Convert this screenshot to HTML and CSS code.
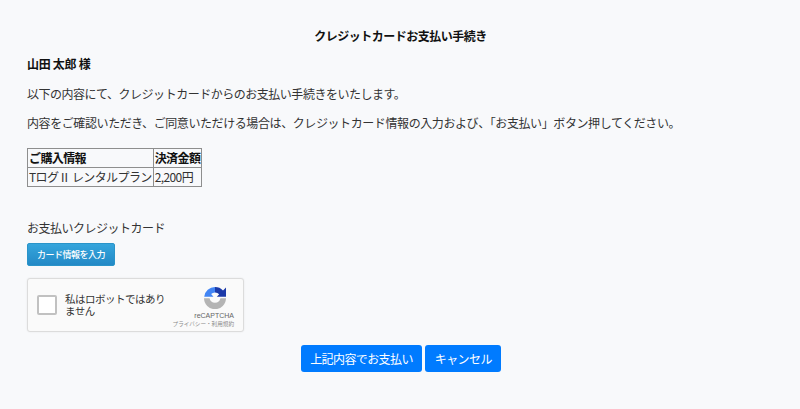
FILE: index.html
```html
<!DOCTYPE html>
<html lang="ja">
<head>
<meta charset="utf-8">
<title>クレジットカードお支払い手続き</title>
<link rel="stylesheet" href="styles.css">
</head>
<body>
<main class="page">
  <h1 class="title">クレジットカードお支払い手続き</h1>
  <p class="name">山田 太郎 様</p>
  <p class="line line-short">以下の内容にて、クレジットカードからのお支払い手続きをいたします。</p>
  <p class="line">内容をご確認いただき、ご同意いただける場合は、クレジットカード情報の入力および、「お支払い」ボタン押してください。</p>
  <table class="order">
    <tr><th>ご購入情報</th><th>決済金額</th></tr>
    <tr><td>TログⅡ レンタルプラン</td><td>2,200円</td></tr>
  </table>
  <p class="card-label">お支払いクレジットカード</p>
  <button class="card-btn" type="button">カード情報を入力</button>
  <div class="captcha">
    <span class="check"></span>
    <span class="captcha-text">私はロボットではありません</span>
    <div class="brand">
      <svg class="logo" viewBox="0 0 22 22" width="22" height="22" aria-hidden="true">
        <path fill="#4285f4" d="M11 0V5.500A5.500 5.500 0 0 0 7.100 7.100L9.500 9.800H.2A11 11 0 0 1 11 0Z"/>
        <path fill="#1c3aa9" d="M11 0A11 11 0 0 1 19 3.400L22 .5V9.800H12.800L15.200 7.300A5.500 5.500 0 0 0 11 5.500Z"/>
        <path fill="#b4b4b4" d="M0 11.200H5.600A5.500 5.500 0 0 0 16.400 11.200H22A11 11 0 0 1 0 11.200Z"/>
      </svg>
      <span class="brand-name">reCAPTCHA</span>
      <span class="brand-links">プライバシー・利用規約</span>
    </div>
  </div>
  <div class="actions">
    <button class="primary" type="button">上記内容でお支払い</button>
    <button class="primary" type="button">キャンセル</button>
  </div>
</main>
</body>
</html>
```
FILE: styles.css
```css
* { box-sizing: border-box; }
html, body { margin: 0; height: 100%; }
body {
  background: #f8f9fb;
  color: #333;
  font-family: "Noto Sans CJK JP", "Noto Sans", sans-serif;
  font-size: 12px;
  letter-spacing: -.41px;
  line-height: 18px;
}
.page { padding: 27px 27px 0; }
.title {
  margin: 0 0 10px;
  font-size: 12px;
  font-weight: 700;
  letter-spacing: -.5px;
  line-height: 18px;
  color: #111;
  text-align: center;
  padding-left: 1px;
}
.name { margin: 0 0 12px; font-weight: 700; color: #111; letter-spacing: -.3px; }
.line { margin: 0 0 11px; }
.line-short { letter-spacing: -.48px; }
.order {
  border-collapse: collapse;
  margin-top: 16px;
  letter-spacing: -.6px;
}
.order th, .order td {
  border: 1px solid #8e8e8e;
  padding: 0 1px;
  height: 19px;
  line-height: 18px;
  text-align: left;
  white-space: nowrap;
}
.order th { color: #111; }
.card-label { margin: 32px 0 0; line-height: 18px; letter-spacing: -.5px; }
.card-btn {
  display: block;
  width: 88px;
  height: 23px;
  margin-top: 6px;
  padding: 0;
  border: 1px solid #2a94c9;
  border-radius: 2px;
  background: linear-gradient(#35a5dc, #2389c6);
  color: #fff;
  font: inherit;
  font-size: 9px;
  font-weight: 500;
  letter-spacing: -.5px;
}
.captcha {
  display: flex;
  align-items: center;
  width: 217px;
  height: 54px;
  margin-top: 12px;
  padding: 0 9px;
  border: 1px solid #dcdcdc;
  border-radius: 3px;
  background: #fafafa;
  box-shadow: 0 0 2px rgba(0, 0, 0, .08);
}
.check {
  flex: none;
  width: 20px;
  height: 20px;
  border: 2px solid #c1c1c1;
  border-radius: 2px;
  background: #fff;
}
.captcha-text {
  width: 104px;
  margin-left: 8px;
  font-size: 10.500px;
  letter-spacing: -.5px;
  line-height: 12.500px;
  color: #333;
}
.brand {
  display: flex;
  flex-direction: column;
  align-items: flex-end;
  width: 38px;
  margin-left: auto;
  padding-top: 6px;
}
.logo { margin-right: 8px; }
.brand-name {
  margin-top: 2px;
  font-family: "Liberation Sans", sans-serif;
  font-size: 7px;
  letter-spacing: 0;
  line-height: 9px;
  color: #666;
}
.brand-links {
  font-size: 5.600px;
  letter-spacing: 0;
  line-height: 9px;
  color: #8a8a8a;
  white-space: nowrap;
}
.actions {
  display: flex;
  justify-content: center;
  gap: 3px;
  margin-top: 13px;
  padding-left: 2px;
}
.primary {
  height: 27px;
  padding: 0 9.500px;
  border: 0;
  border-radius: 3px;
  background: #007bff;
  color: #fff;
  font: inherit;
  letter-spacing: -.6px;
}
```
